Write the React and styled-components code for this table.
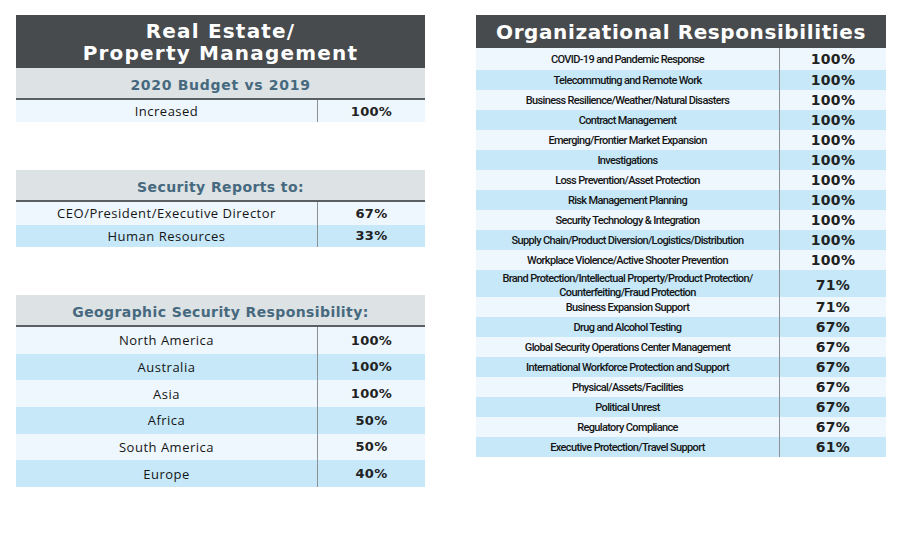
import React from 'react';
import styled, { createGlobalStyle } from 'styled-components';

const GlobalStyle = createGlobalStyle`
  body {
    margin: 0;
    background: #ffffff;
  }
`;

const Page = styled.div`
  display: flex;
  align-items: flex-start;
  gap: 51px;
  padding: 15px 0 0 16px;
  width: 900px;
  height: 550px;
  box-sizing: border-box;
`;

const Column = styled.div`
  display: flex;
  flex-direction: column;
  gap: 48px;
  width: 409px;
`;

const Panel = styled.div`
  width: ${({ width }) => width}px;
`;

const Header = styled.div`
  background: #474b4e;
  color: #ffffff;
  text-align: center;
  font-family: 'DejaVu Sans', sans-serif;
  font-weight: bold;
  font-size: ${({ size }) => size || 20}px;
  letter-spacing: ${({ spacing }) => spacing || 1.2}px;
  line-height: ${({ lh }) => lh || 22}px;
  padding: ${({ pad }) => pad || '5px 0 4px'};
`;

const SubHeader = styled.div`
  background: #dde2e4;
  color: #46697f;
  text-align: center;
  font-family: 'DejaVu Sans', sans-serif;
  font-weight: bold;
  font-size: 14px;
  letter-spacing: ${({ spacing }) => spacing || 0.4}px;
  height: 30px;
  line-height: 34px;
  border-bottom: 2px solid #5a5f63;
`;

const Row = styled.div`
  display: grid;
  grid-template-columns: ${({ labelWidth }) => labelWidth}px 1fr;
  height: ${({ h }) => h}px;
  background: ${({ alt }) => (alt ? '#c6e8f9' : '#eef7fd')};
`;

const Label = styled.div`
  display: flex;
  align-items: center;
  justify-content: center;
  text-align: center;
  color: #151515;
  font-family: ${({ narrow }) => (narrow ? 'Roboto, sans-serif' : "'Open Sans', sans-serif")};
  font-size: ${({ narrow }) => (narrow ? 11 : 13)}px;
  font-weight: 500;
  letter-spacing: ${({ narrow }) => (narrow ? -0.65 : 0.5)}px;
  line-height: 14px;
  padding-top: ${({ narrow }) => (narrow ? 2 : 0)}px;
`;

const Value = styled.div`
  display: flex;
  align-items: center;
  justify-content: center;
  border-left: 1px solid #8b9094;
  color: #222;
  font-family: 'DejaVu Sans', sans-serif;
  font-weight: bold;
  font-size: ${({ size }) => size || 13}px;
  letter-spacing: 0.3px;
`;

const reports = [
  ['CEO/President/Executive Director', '67%'],
  ['Human Resources', '33%'],
];

const geo = [
  ['North America', '100%'],
  ['Australia', '100%'],
  ['Asia', '100%'],
  ['Africa', '50%'],
  ['South America', '50%'],
  ['Europe', '40%'],
];

const org = [
  ['COVID-19 and Pandemic Response', '100%'],
  ['Telecommuting and Remote Work', '100%'],
  ['Business Resilience/Weather/Natural Disasters', '100%'],
  ['Contract Management', '100%'],
  ['Emerging/Frontier Market Expansion', '100%'],
  ['Investigations', '100%'],
  ['Loss Prevention/Asset Protection', '100%'],
  ['Risk Management Planning', '100%'],
  ['Security Technology & Integration', '100%'],
  ['Supply Chain/Product Diversion/Logistics/Distribution', '100%'],
  ['Workplace Violence/Active Shooter Prevention', '100%'],
  ['Brand Protection/Intellectual Property/Product Protection/\nCounterfeiting/Fraud Protection', '71%'],
  ['Business Expansion Support', '71%'],
  ['Drug and Alcohol Testing', '67%'],
  ['Global Security Operations Center Management', '67%'],
  ['International Workforce Protection and Support', '67%'],
  ['Physical/Assets/Facilities', '67%'],
  ['Political Unrest', '67%'],
  ['Regulatory Compliance', '67%'],
  ['Executive Protection/Travel Support', '61%'],
];

const StatTable = ({ title, rows, rowHeight }) => (
  <Panel width={409}>
    <SubHeader>{title}</SubHeader>
    {rows.map(([label, value], i) => (
      <Row key={label} labelWidth={301} h={rowHeight} alt={i % 2 === 1}>
        <Label>{label}</Label>
        <Value>{value}</Value>
      </Row>
    ))}
  </Panel>
);

const App = () => (
  <>
    <GlobalStyle />
    <Page>
      <Column>
        <Panel width={409}>
          <Header>
            Real Estate/
            <br />
            Property Management
          </Header>
          <SubHeader spacing={0.7}>2020 Budget vs 2019</SubHeader>
          <Row labelWidth={301} h={22}>
            <Label>Increased</Label>
            <Value>100%</Value>
          </Row>
        </Panel>
        <StatTable title='Security Reports to:' rows={reports} rowHeight={22.5} />
        <StatTable title='Geographic Security Responsibility:' rows={geo} rowHeight={26.67} />
      </Column>
      <Panel width={410}>
        <Header size={20} spacing={0.6} lh={24} pad='5px 0 4px'>
          Organizational Responsibilities
        </Header>
        {org.map(([label, value], i) => {
          const lines = label.split('\n');
          const h = lines.length > 1 ? 27 : i === 0 ? 22 : 20;
          return (
            <Row key={label} labelWidth={303} h={h} alt={i % 2 === 1}>
              <Label narrow>
                <span>
                  {lines.map((l, j) => (
                    <React.Fragment key={j}>
                      {j > 0 && <br />}
                      {l}
                    </React.Fragment>
                  ))}
                </span>
              </Label>
              <Value size={14}>{value}</Value>
            </Row>
          );
        })}
      </Panel>
    </Page>
  </>
);

export default App;
